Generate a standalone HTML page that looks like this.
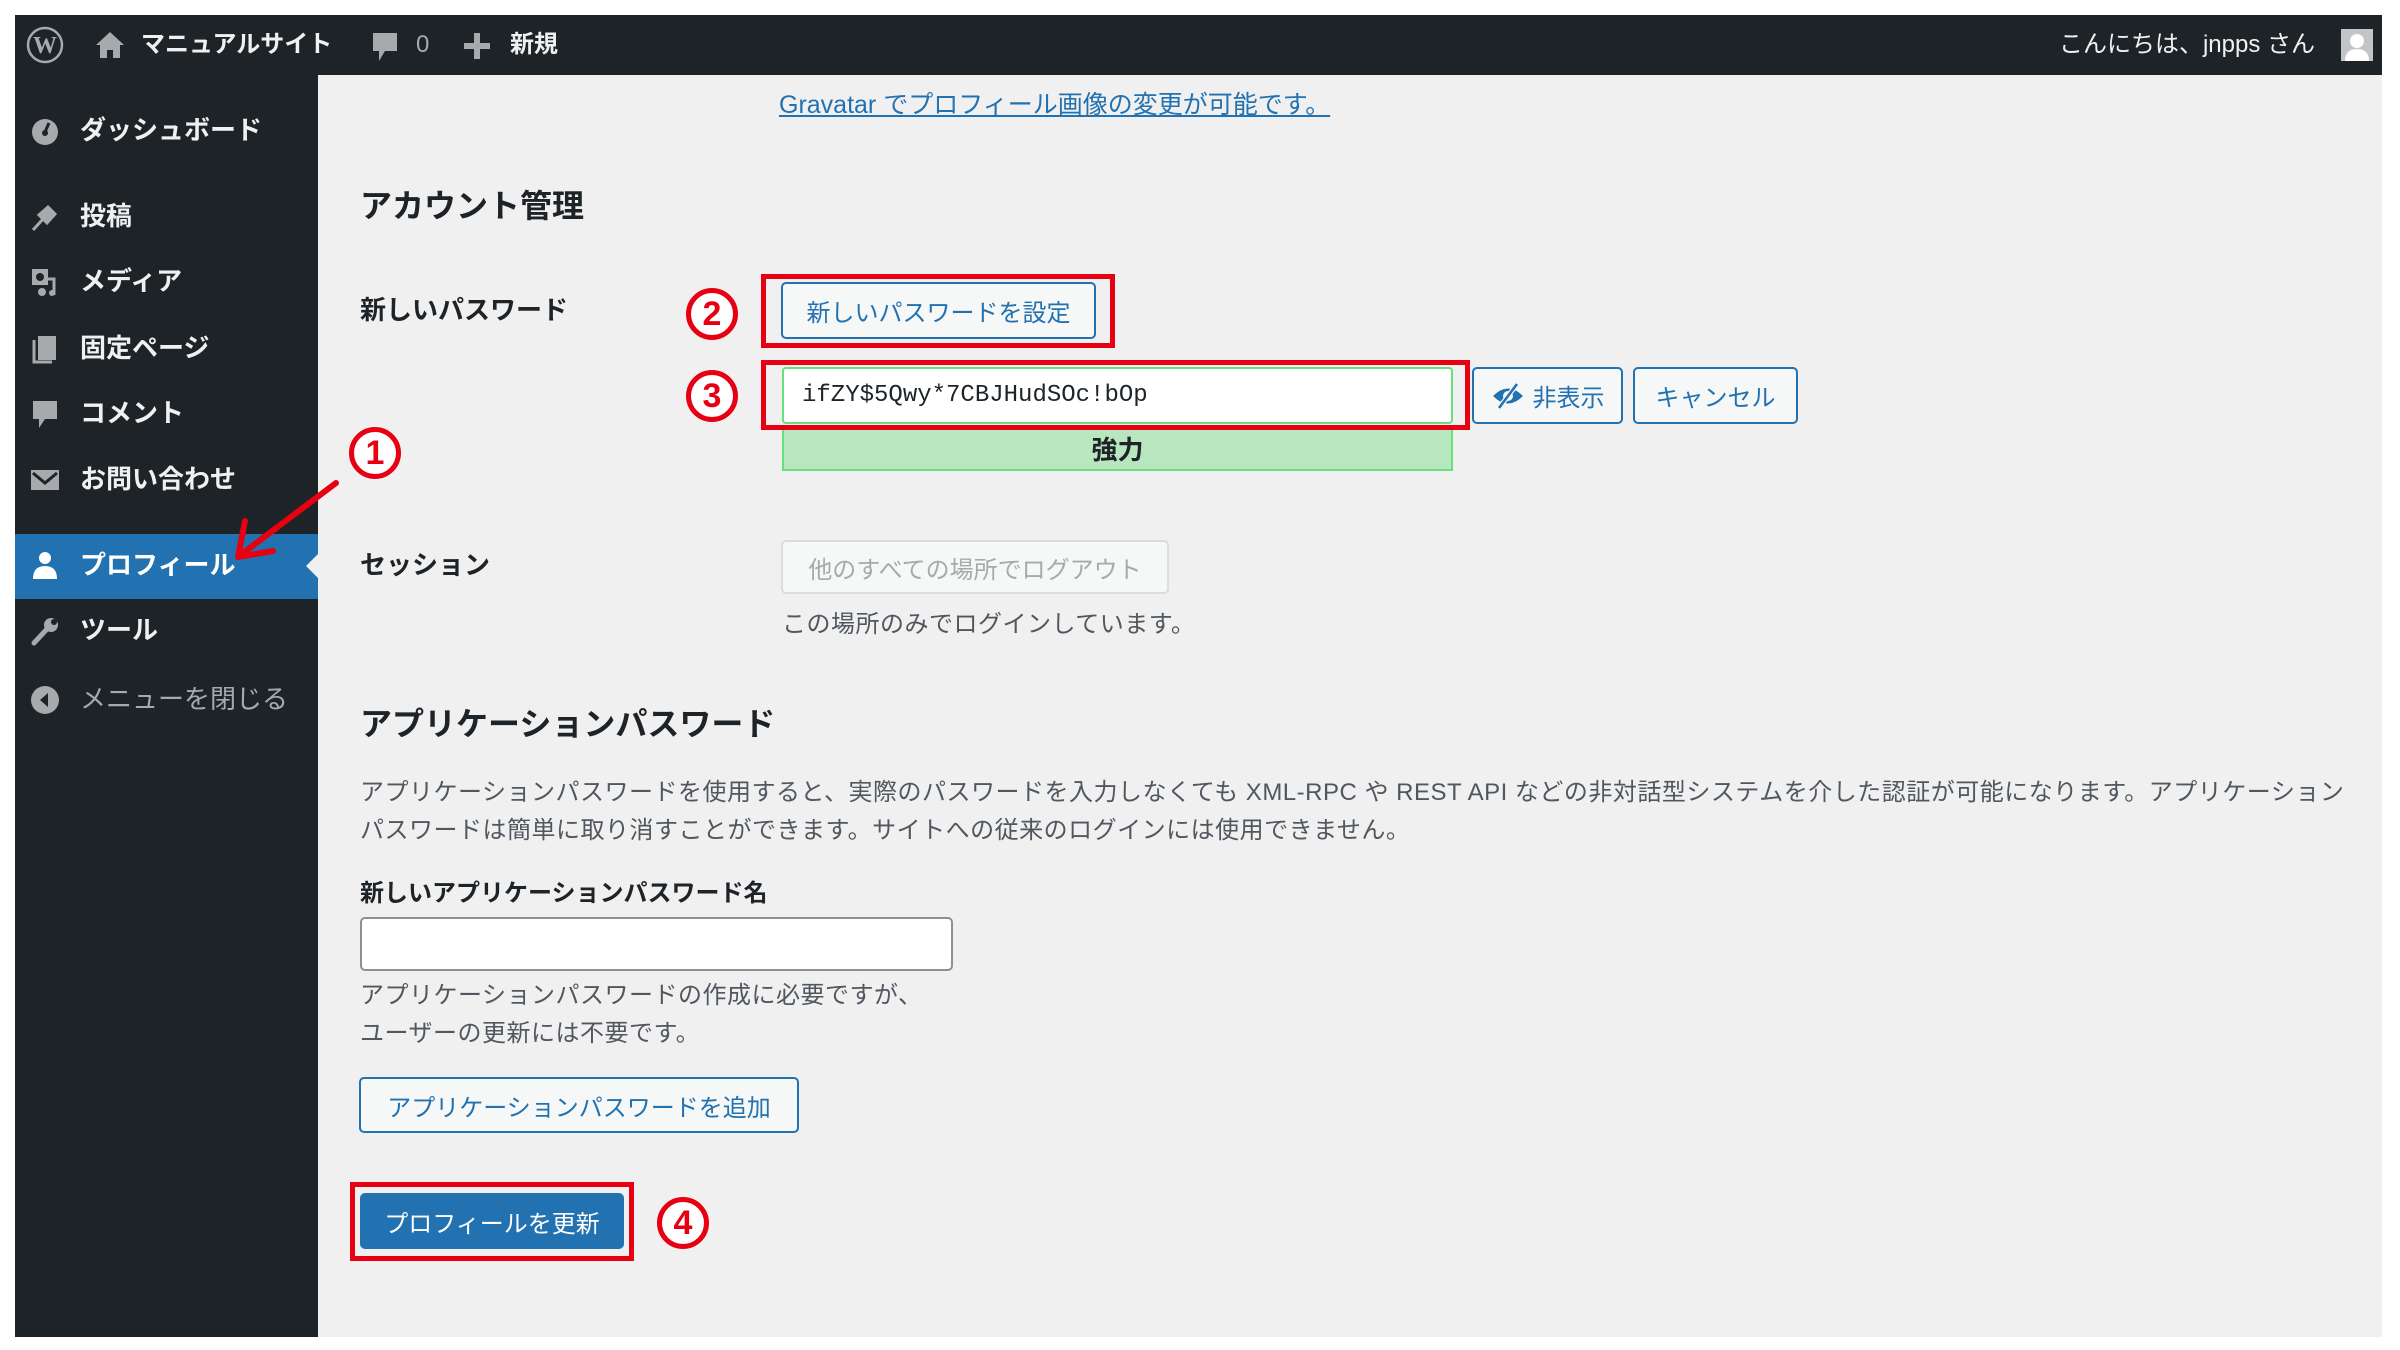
<!DOCTYPE html>
<html><head><meta charset="utf-8">
<style>
*{margin:0;padding:0;box-sizing:border-box}
body{width:2400px;height:1350px;background:#fff;position:relative;overflow:hidden;font-family:"Liberation Sans","Noto Sans CJK JP",sans-serif;color:#1d2327}
.a{position:absolute;white-space:nowrap}
#top{left:15px;top:15px;width:2367px;height:60px;background:#1d2327}
#side{left:15px;top:75px;width:303px;height:1262px;background:#1d2327}
#main{left:318px;top:75px;width:2064px;height:1262px;background:#f0f0f1}
.tb{color:#f0f0f1;font-size:24px;top:30px;line-height:30px;font-weight:bold}
.si{color:#f0f0f1;font-size:26px;left:80px;line-height:34px;font-weight:bold}
.ic{left:30px;width:30px;height:30px}
.lbl{font-size:26px;font-weight:bold;left:360px;line-height:34px}
.btn{border:2px solid #2271b1;border-radius:5px;background:#f6f7f7;color:#2271b1;font-size:24px;display:flex;align-items:center;justify-content:center}
.red{border:5px solid #e60012}
.c{width:52px;height:52px;border:5px solid #e60012;border-radius:50%;color:#e60012;font-weight:bold;font-size:34px;display:flex;align-items:center;justify-content:center;background:#fff;line-height:1}
.p{font-size:24px;color:#50575e;line-height:38px;letter-spacing:0.5px}
</style></head><body>
<div class="a" id="top"></div>
<div class="a" id="side"></div>
<div class="a" id="main"></div>

<svg class="a" style="left:26px;top:26px" width="38" height="38" viewBox="0 0 38 38"><circle cx="19" cy="19" r="17" fill="none" stroke="#a7aaad" stroke-width="2.5"/><text x="19" y="27" text-anchor="middle" font-family="Liberation Serif" font-weight="bold" font-size="24" fill="#a7aaad">W</text></svg>
<svg class="a" style="left:94px;top:30px" width="32" height="30" viewBox="0 0 32 30"><path d="M16 2 L2 15 H6 V28 H13 V20 H19 V28 H26 V15 H30 Z" fill="#a7aaad"/></svg>
<div class="a tb" style="left:141px">マニュアルサイト</div>
<svg class="a" style="left:371px;top:31px" width="28" height="32" viewBox="0 0 28 32"><path d="M2 2 H26 V20 H14 L8 30 V20 H2 Z" fill="#a7aaad"/></svg>
<div class="a tb" style="left:416px;color:#a7aaad;font-weight:normal">0</div>
<svg class="a" style="left:464px;top:33px" width="26" height="26"><path d="M10 0h6v10h10v6H16v10h-6V16H0v-6h10z" fill="#a7aaad"/></svg>
<div class="a tb" style="left:510px">新規</div>
<div class="a tb" style="right:85px;font-weight:normal">こんにちは、jnpps さん</div>
<div class="a" style="left:2341px;top:29px;width:32px;height:32px;background:#c3c4c7"><svg width="32" height="32"><circle cx="16" cy="12" r="7" fill="#fff"/><path d="M4 32 Q4 20 16 20 Q28 20 28 32Z" fill="#fff"/></svg></div>

<svg class="a ic" style="top:116px" viewBox="0 0 30 30"><circle cx="15" cy="16" r="13" fill="#a7aaad"/><path d="M15 16 L19 7" stroke="#1d2327" stroke-width="3"/><circle cx="15" cy="17" r="3" fill="#1d2327"/></svg>
<div class="a si" style="top:113px">ダッシュボード</div>
<svg class="a ic" style="top:202px" viewBox="0 0 30 30"><path d="M3 28 L13 17 L9 13 L18 5 L25 12 L17 21 L13 17" fill="#a7aaad" stroke="#a7aaad" stroke-width="3"/></svg>
<div class="a si" style="top:199px">投稿</div>
<svg class="a ic" style="top:267px" viewBox="0 0 30 30"><rect x="2" y="2" width="16" height="16" fill="#a7aaad"/><circle cx="10" cy="10" r="4" fill="#1d2327"/><path d="M18 12h6v16" stroke="#a7aaad" stroke-width="3" fill="none"/><circle cx="12" cy="25" r="4" fill="#a7aaad"/><circle cx="22" cy="26" r="3" fill="#a7aaad"/></svg>
<div class="a si" style="top:264px">メディア</div>
<svg class="a ic" style="top:334px" viewBox="0 0 30 30"><rect x="8" y="2" width="18" height="24" fill="#a7aaad"/><path d="M4 6v22h18" stroke="#a7aaad" stroke-width="3" fill="none"/></svg>
<div class="a si" style="top:331px">固定ページ</div>
<svg class="a ic" style="top:399px" viewBox="0 0 30 30"><path d="M3 2 H27 V20 H15 L9 29 V20 H3 Z" fill="#a7aaad"/></svg>
<div class="a si" style="top:396px">コメント</div>
<svg class="a ic" style="top:465px" viewBox="0 0 30 30"><rect x="1" y="5" width="28" height="20" fill="#a7aaad"/><path d="M3 8 L15 18 L27 8" stroke="#1d2327" stroke-width="3" fill="none"/></svg>
<div class="a si" style="top:462px">お問い合わせ</div>
<div class="a" style="left:15px;top:534px;width:303px;height:65px;background:#2271b1"></div>
<div class="a" style="left:306px;top:554px;width:0;height:0;border-top:12px solid transparent;border-bottom:12px solid transparent;border-right:12px solid #f0f0f1"></div>
<svg class="a ic" style="top:550px" viewBox="0 0 30 30"><circle cx="15" cy="8" r="6" fill="#fff"/><path d="M3 29 Q3 16 15 16 Q27 16 27 29Z" fill="#fff"/></svg>
<div class="a si" style="top:548px;color:#fff">プロフィール</div>
<svg class="a ic" style="top:616px" viewBox="0 0 30 30"><path d="M4 27 L17 13" stroke="#a7aaad" stroke-width="5" stroke-linecap="round"/><circle cx="21" cy="9" r="7" fill="#a7aaad"/><circle cx="24" cy="6" r="3" fill="#1d2327"/></svg>
<div class="a si" style="top:613px">ツール</div>
<svg class="a ic" style="top:685px" viewBox="0 0 30 30"><circle cx="15" cy="15" r="14" fill="#a7aaad"/><path d="M18 8 L10 15 L18 22Z" fill="#1d2327"/></svg>
<div class="a si" style="top:682px;color:#a7aaad;font-weight:normal">メニューを閉じる</div>

<div class="a" style="left:779px;top:89px;font-size:25px;color:#2271b1;text-decoration:underline;line-height:32px">Gravatar でプロフィール画像の変更が可能です。</div>
<div class="a" style="left:360px;top:185px;font-size:32px;font-weight:bold;line-height:42px">アカウント管理</div>
<div class="a lbl" style="top:293px">新しいパスワード</div>

<div class="a red" style="left:761px;top:274px;width:354px;height:74px"></div>
<div class="a btn" style="left:781px;top:282px;width:315px;height:57px">新しいパスワードを設定</div>
<div class="a c" style="left:686px;top:288px">2</div>

<div class="a" style="left:782px;top:425px;width:671px;height:46px;background:#b8e6bf;border:2px solid #68de7c;font-weight:bold;font-size:26px;display:flex;align-items:center;justify-content:center">強力</div>
<div class="a" style="left:782px;top:367px;width:671px;height:57px;background:#fff;border:2px solid #68de7c;border-radius:4px;font-family:'Liberation Mono',monospace;font-size:24px;padding-left:18px;line-height:53px">ifZY$5Qwy*7CBJHudSOc!bOp</div>
<div class="a red" style="left:761px;top:360px;width:709px;height:70px"></div>
<div class="a c" style="left:686px;top:370px">3</div>
<div class="a btn" style="left:1472px;top:367px;width:151px;height:57px"><svg width="34" height="26" viewBox="0 0 34 26" style="margin-right:8px"><path d="M2 13 Q17 -2 32 13 Q17 28 2 13Z" fill="#2271b1"/><circle cx="17" cy="13" r="5" fill="#f6f7f7"/><path d="M8 25 L26 1" stroke="#f6f7f7" stroke-width="5"/><path d="M8 25 L26 1" stroke="#2271b1" stroke-width="2.5"/></svg>非表示</div>
<div class="a btn" style="left:1633px;top:367px;width:165px;height:57px">キャンセル</div>

<div class="a c" style="left:349px;top:427px">1</div>
<svg class="a" style="left:223px;top:469px" width="130" height="100"><path d="M113 14 L20 84" stroke="#e60012" stroke-width="6" stroke-linecap="round"/><path d="M15 88 L22 52 M15 88 L50 82" stroke="#e60012" stroke-width="6" stroke-linecap="round"/></svg>

<div class="a lbl" style="top:548px">セッション</div>
<div class="a" style="left:781px;top:540px;width:388px;height:54px;border:2px solid #dcdcde;border-radius:5px;background:#f6f7f7;color:#a7aaad;font-size:24px;display:flex;align-items:center;justify-content:center">他のすべての場所でログアウト</div>
<div class="a p" style="left:782px;top:606px">この場所のみでログインしています。</div>

<div class="a" style="left:360px;top:703px;font-size:32px;font-weight:bold;line-height:42px">アプリケーションパスワード</div>
<div class="a p" style="left:360px;top:774px">アプリケーションパスワードを使用すると、実際のパスワードを入力しなくても XML-RPC や REST API などの非対話型システムを介した認証が可能になります。アプリケーション</div>
<div class="a p" style="left:360px;top:812px">パスワードは簡単に取り消すことができます。サイトへの従来のログインには使用できません。</div>
<div class="a" style="left:360px;top:877px;font-size:24px;font-weight:bold;line-height:34px">新しいアプリケーションパスワード名</div>
<div class="a" style="left:360px;top:917px;width:593px;height:54px;background:#fff;border:2px solid #8c8f94;border-radius:5px"></div>
<div class="a p" style="left:360px;top:977px">アプリケーションパスワードの作成に必要ですが、</div>
<div class="a p" style="left:360px;top:1015px">ユーザーの更新には不要です。</div>
<div class="a btn" style="left:359px;top:1077px;width:440px;height:56px">アプリケーションパスワードを追加</div>

<div class="a red" style="left:350px;top:1182px;width:284px;height:79px"></div>
<div class="a" style="left:360px;top:1193px;width:264px;height:56px;background:#2271b1;border-radius:5px;color:#fff;font-size:24px;display:flex;align-items:center;justify-content:center">プロフィールを更新</div>
<div class="a c" style="left:657px;top:1197px">4</div>
</body></html>
